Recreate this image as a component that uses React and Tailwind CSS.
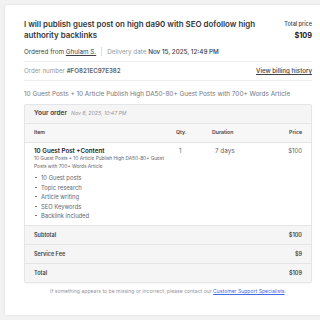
export default function App() {
  const font = { fontFamily: "Inter, 'Noto Sans', sans-serif" };
  return (
    <div className="w-[320px] h-[320px] overflow-hidden bg-[#f2f2f2] pt-[5px] pl-[5px]" style={font}>
      <div className="w-[326px] h-[310px] bg-white rounded-tl-[3px] shadow-[0_0_3px_rgba(0,0,0,0.08)] px-[19px] pt-[13px] text-[#404145]">
        <div className="flex justify-between items-start">
          <div className="w-[240px] text-[7.9px] leading-[11px] font-semibold text-[#333438] pt-[1px]">
            I will publish guest post on high da90 with SEO dofollow high authority backlinks
          </div>
          <div className="flex flex-col items-end">
            <div className="text-[5.5px] leading-[8px] font-medium text-[#404145] mt-[2px]">Total price</div>
            <div className="text-[7.3px] leading-[12px] font-bold text-[#222325] mt-[2px]">$109</div>
          </div>
        </div>
        <div className="flex items-center mt-[5px] text-[6.3px] leading-[8px]">
          <span className="text-[#404145]">Ordered from <span className="underline">Ghulam S.</span></span>
          <span className="w-px h-[9px] bg-[#dadbdd] mx-[5px]"></span>
          <span className="text-[#95979d]">Delivery date <span className="text-[#404145] font-medium">Nov 15, 2025, 12:49 PM</span></span>
        </div>
        <div className="h-px bg-[#efeff0] mt-[5px]"></div>
        <div className="flex justify-between items-center h-[18px] text-[6.2px]">
          <span className="text-[#95979d]">Order number <span className="text-[#62646a] font-semibold">#FO821EC97E382</span></span>
          <span className="text-[#404145] font-medium underline">View billing history</span>
        </div>
        <div className="h-px bg-[#efeff0]"></div>
        <div className="text-[6.4px] leading-[8px] text-[#74767e] mt-[9px] whitespace-nowrap">
          10 Guest Posts + 10 Article Publish High DA50-80+ Guest Posts with 700+ Words Article
        </div>
        <div className="mt-[6px] border border-[#e4e5e7] rounded-[2px] overflow-hidden shadow-[0_1px_2px_rgba(0,0,0,0.04)]">
          <div className="h-[19px] bg-[#f5f5f5] flex items-center px-[9px] border-b border-[#e4e5e7]">
            <span className="text-[6.5px] font-semibold text-[#404145]">Your order</span>
            <span className="text-[5.2px] italic text-[#95979d] ml-[4px]">Nov 8, 2025, 10:47 PM</span>
          </div>
          <div className="h-[19px] bg-[#f7f7f7] flex items-center px-[9px] border-b border-[#e4e5e7] text-[5.2px] font-semibold text-[#404145]">
            <span className="w-[142px]">Item</span>
            <span className="w-[36px]">Qty.</span>
            <span className="w-[40px]">Duration</span>
            <span className="flex-1 text-right">Price</span>
          </div>
          <div className="bg-white px-[9px] pt-[4px] h-[82px]">
            <div className="flex">
              <div className="w-[142px]">
                <div className="text-[6.2px] leading-[8px] font-semibold text-[#222325]">10 Guest Post +Content</div>
                <div className="text-[4.8px] leading-[7.5px] text-[#62646a] w-[132px]">
                  10 Guest Posts + 10 Article Publish High DA50-80+ Guest Posts with 700+ Words Article
                </div>
                <ul className="mt-[3px] text-[5.8px] leading-[9.5px] text-[#62646a]">
                  {["10 Guest posts", "Topic research", "Article writing", "SEO Keywords", "Backlink included"].map((t) => (
                    <li key={t} className="flex items-center">
                      <span className="w-[2px] h-[1px] bg-[#74767e] ml-[1px] mr-[4px]"></span>
                      {t}
                    </li>
                  ))}
                </ul>
              </div>
              <div className="w-[36px] text-[6px] leading-[8px] text-[#62646a] pl-[3px]">1</div>
              <div className="w-[40px] text-[6.3px] leading-[8px] text-[#62646a] pl-[3px]">7 days</div>
              <div className="flex-1 text-right text-[6px] leading-[8px] text-[#62646a]">$100</div>
            </div>
          </div>
          {[["Subtotal", "$100"], ["Service Fee", "$9"], ["Total", "$109"]].map(([l, v]) => (
            <div key={l} className="h-[19px] bg-[#f5f5f5] flex justify-between items-center px-[9px] text-[5.5px] font-semibold text-[#404145] border-t border-[#e4e5e7]">
              <span>{l}</span>
              <span>{v}</span>
            </div>
          ))}
        </div>
        <div className="text-center text-[5.1px] text-[#95979d] mt-[5px] whitespace-nowrap">
          If something appears to be missing or incorrect, please contact our{" "}
          <span className="text-[#446ee7] underline">Customer Support Specialists</span>.
        </div>
      </div>
    </div>
  );
}
